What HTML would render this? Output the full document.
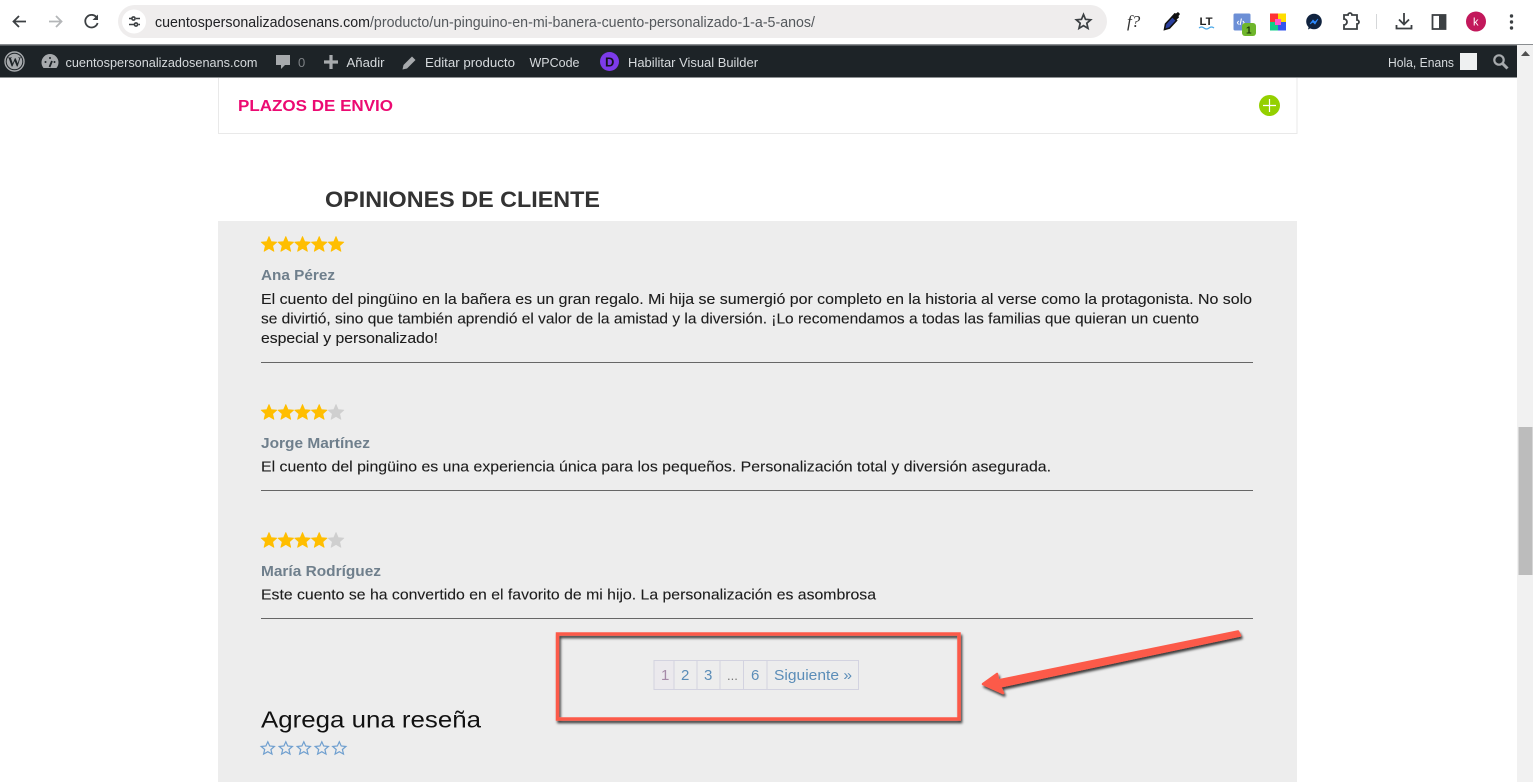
<!DOCTYPE html>
<html lang="es"><head><meta charset="utf-8"><title>Opiniones</title>
<style>
html,body{margin:0;padding:0;background:#fff;width:1533px;height:782px;overflow:hidden}
svg{display:block;position:absolute;left:0;top:0}
text{font-family:"Liberation Sans",sans-serif}
.b{font-size:14.5px;fill:#1c1c1c;stroke:#1c1c1c;stroke-width:.1px}
.n{font-size:14.5px;font-weight:700;fill:#6f7f8c}
.a{font-size:13px;fill:#d6dadd}
.p{font-size:15px;fill:#5b8db8}
</style></head><body>
<svg width="1533" height="782" viewBox="0 0 1533 782" xmlns="http://www.w3.org/2000/svg">
<defs>
<path id="s" d="M8 0.5 L10.200 5.600 L15.800 6.100 L11.600 9.800 L12.900 15.300 L8 12.400 L3.100 15.300 L4.400 9.800 L0.200 6.100 L5.800 5.600 Z"/>
<path id="o" d="M6.800 0.800 L8.700 5 L13.400 5.500 L9.900 8.500 L11 13.100 L6.800 10.700 L2.600 13.100 L3.700 8.500 L0.200 5.500 L4.900 5 Z"/>
<filter id="sh" x="-5%" y="-20%" width="110%" height="140%"><feDropShadow dx="1.500" dy="2.500" stdDeviation="1.200" flood-color="#000" flood-opacity=".75"/></filter>
</defs>
<rect width="1533" height="782" fill="#fff"/>

<!-- chrome toolbar -->
<rect x="118" y="5" width="989" height="33" rx="16.500" fill="#efeded"/>
<circle cx="134" cy="21.500" r="12" fill="#fff"/>
<g fill="none" stroke="#3c4043" stroke-width="1.600">
<path d="M129 18.500h2.500M136 18.500h4M129 24.500h5M138.500 24.500h1.500"/><circle cx="133.500" cy="18.500" r="1.600"/><circle cx="136" cy="24.500" r="1.600"/>
</g>
<path d="M26 21.500H14M19 16l-5.500 5.500 5.500 5.500" fill="none" stroke="#3c4043" stroke-width="1.800"/>
<path d="M49 21.500h12M56 16l5.500 5.500-5.500 5.500" fill="none" stroke="#b4b6b8" stroke-width="1.800"/>
<path d="M97 18a6.300 6.300 0 1 0 .6 5" fill="none" stroke="#3c4043" stroke-width="1.800"/><path d="M98 14.500v5.500h-5.500z" fill="#3c4043"/>
<text x="155" y="27" font-size="14.500" fill="#202124" textLength="660" lengthAdjust="spacingAndGlyphs">cuentospersonalizadosenans.com<tspan fill="#54585c">/producto/un-pinguino-en-mi-banera-cuento-personalizado-1-a-5-anos/</tspan></text>
<path d="M1083.500 14.500l2 4.800 5.200.5-3.900 3.400 1.200 5.100-4.500-2.700-4.500 2.700 1.200-5.100-3.900-3.400 5.200-.5z" fill="none" stroke="#3c4043" stroke-width="1.700"/>
<text x="1127" y="27" font-size="17" font-style="italic" fill="#333" style="font-family:'Liberation Serif',serif">f?</text>
<path d="M1164.500 29.500l1-5.500 7-7.500 4 4-7 7.500z" fill="#2a3f9e" stroke="#111" stroke-width="1.600"/><path d="M1171.500 16.500l3-3.500 1.500.5 2-1.500 2 2-1.500 2 .5 1.500-3.500 3z" fill="#111"/>
<text x="1199.500" y="25" font-size="11" font-weight="700" fill="#222" textLength="13" lengthAdjust="spacingAndGlyphs">LT</text>
<path d="M1199 28q2.500-2 5 0t5 0 5 0" fill="none" stroke="#4aa8e8" stroke-width="1.200"/>
<rect x="1233.500" y="13.500" width="17" height="17" rx="1.500" fill="#6c8fd6"/><text x="1236.500" y="25" font-size="9" font-weight="700" fill="#fff">‹/›</text>
<rect x="1242" y="23" width="14" height="13" rx="3" fill="#6fb62c"/><text x="1246" y="33.500" font-size="10" font-weight="700" fill="#1e3a0c">1</text>
<rect x="1270" y="13.500" width="8" height="8.500" fill="#f33"/><rect x="1278" y="13.500" width="8" height="8.500" fill="#fd0"/><rect x="1270" y="22" width="8" height="8.500" fill="#1c8"/><rect x="1278" y="22" width="8" height="8.500" fill="#35e"/><rect x="1275" y="19" width="6" height="6" fill="#f5c"/>
<circle cx="1314" cy="21.500" r="7.800" fill="#10233f"/><path d="M1308 29.500l1-4 3 2z" fill="#10233f"/><path d="M1310 24l3-4 2 2 3-3-3 5-2-2z" fill="#2e8bff" stroke="#2e8bff" stroke-width=".7"/>
<path d="M1344 15h4a2 2 0 0 1 4 0h5v5a2 2 0 0 1 0 4v5h-13v-4a2.500 2.500 0 0 0 0-6z" fill="none" stroke="#3c4043" stroke-width="1.800"/>
<rect x="1376" y="14" width="1" height="15" fill="#d5d7d9"/>
<path d="M1404 13v11M1399 19.500l5 5 5-5M1396.500 25v3.500h15V25" fill="none" stroke="#3c4043" stroke-width="1.800"/>
<rect x="1432.500" y="15" width="13" height="14" fill="none" stroke="#3c4043" stroke-width="1.800"/><rect x="1439" y="15" width="7" height="14" fill="#3c4043"/>
<circle cx="1476" cy="21.500" r="10" fill="#c2185b"/><text x="1473" y="25.500" font-size="11" fill="#fff">k</text>
<circle cx="1511.500" cy="16" r="1.700" fill="#3c4043"/><circle cx="1511.500" cy="22" r="1.700" fill="#3c4043"/><circle cx="1511.500" cy="28" r="1.700" fill="#3c4043"/>
<rect y="44" width="1533" height="1.500" fill="#8a8d90"/>

<!-- scrollbar -->
<rect x="1517" y="45" width="16" height="737" fill="#f1f1f1"/>
<rect x="1518.500" y="427" width="14" height="148" fill="#bcbcbc"/>
<path d="M1521 56l4.500-5 4.500 5z" fill="#505050"/>

<!-- admin bar -->
<rect y="45.500" width="1517" height="32" fill="#1d2327"/>
<circle cx="14.500" cy="61.500" r="9.500" fill="none" stroke="#a7aaad" stroke-width="1.400"/><circle cx="14.500" cy="61.500" r="7.800" fill="#a7aaad"/><text x="7.800" y="66.500" font-size="14" font-weight="700" fill="#1d2327" style="font-family:'Liberation Serif',serif" textLength="13.500" lengthAdjust="spacingAndGlyphs">W</text>
<path d="M43.500 68a8.500 8.500 0 1 1 13 0z" fill="#a7aaad"/><circle cx="45.500" cy="62" r="1" fill="#1d2327"/><circle cx="50" cy="58" r="1" fill="#1d2327"/><circle cx="54.500" cy="62" r="1" fill="#1d2327"/><path d="M49.500 67l2.500-6" stroke="#1d2327" stroke-width="1.800"/>
<text x="65.500" y="67" class="a" textLength="192" lengthAdjust="spacingAndGlyphs">cuentospersonalizadosenans.com</text>
<path d="M276 55h14v10h-5l-4 4v-4h-5z" fill="#a7aaad"/>
<text x="298" y="67" font-size="13" fill="#7d8185">0</text>
<path d="M331 55v14M324 62h14" stroke="#a7aaad" stroke-width="3.200"/>
<text x="346.500" y="67" class="a" textLength="38" lengthAdjust="spacingAndGlyphs">Añadir</text>
<path d="M402.500 69.500l1-4.500 8.500-8.500 3.500 3.500-8.500 8.500z" fill="#a7aaad"/>
<text x="425" y="67" class="a" textLength="90" lengthAdjust="spacingAndGlyphs">Editar producto</text>
<text x="529.500" y="67" class="a" textLength="50" lengthAdjust="spacingAndGlyphs">WPCode</text>
<circle cx="609.500" cy="61.500" r="9.500" fill="#7d3bea"/><text x="605" y="66.500" font-size="13" font-weight="700" fill="#15121e">D</text>
<text x="628" y="67" class="a" textLength="130" lengthAdjust="spacingAndGlyphs">Habilitar Visual Builder</text>
<text x="1388" y="67" class="a" textLength="66" lengthAdjust="spacingAndGlyphs">Hola, Enans</text>
<rect x="1460" y="53" width="17" height="17" fill="#eef0f1"/>
<circle cx="1499" cy="60" r="4.700" fill="none" stroke="#a7aaad" stroke-width="2.200"/><path d="M1502.500 63.500l5 5" stroke="#a7aaad" stroke-width="3"/>

<!-- accordion -->
<path d="M218.500 78v55.500h1078.500V78" fill="none" stroke="#e9e9e9" stroke-width="1"/>
<text x="238" y="111" font-size="16" font-weight="700" fill="#ec0a72" textLength="155" lengthAdjust="spacingAndGlyphs">PLAZOS DE ENVIO</text>
<circle cx="1269.500" cy="105.500" r="10.500" fill="#94d000"/>
<path d="M1269.500 99v13M1263 105.500h13" stroke="#fff" stroke-width="1.200"/>

<text x="325" y="207" font-size="22" font-weight="700" fill="#333" textLength="275" lengthAdjust="spacingAndGlyphs">OPINIONES DE CLIENTE</text>

<!-- panel -->
<rect x="218" y="221" width="1079" height="561" fill="#ededed"/>

<g fill="#ffbe00" stroke="#ffbe00" stroke-width=".8" stroke-linejoin="round"><use href="#s" x="261" y="236"/><use href="#s" x="277.800" y="236"/><use href="#s" x="294.500" y="236"/><use href="#s" x="311.200" y="236"/><use href="#s" x="328" y="236"/></g>
<text x="261" y="280" class="n" textLength="74" lengthAdjust="spacingAndGlyphs">Ana Pérez</text>
<text x="261" y="304" class="b" textLength="991" lengthAdjust="spacingAndGlyphs">El cuento del pingüino en la bañera es un gran regalo. Mi hija se sumergió por completo en la historia al verse como la protagonista. No solo</text>
<text x="261" y="323.500" class="b" textLength="938" lengthAdjust="spacingAndGlyphs">se divirtió, sino que también aprendió el valor de la amistad y la diversión. ¡Lo recomendamos a todas las familias que quieran un cuento</text>
<text x="261" y="343" class="b" textLength="177" lengthAdjust="spacingAndGlyphs">especial y personalizado!</text>
<rect x="261" y="362" width="992" height="1" fill="#666"/>

<g stroke-width=".8" stroke-linejoin="round"><g fill="#ffbe00" stroke="#ffbe00"><use href="#s" x="261" y="404"/><use href="#s" x="277.800" y="404"/><use href="#s" x="294.500" y="404"/><use href="#s" x="311.200" y="404"/></g><use href="#s" x="328" y="404" fill="#cfcfcf" stroke="#cfcfcf"/></g>
<text x="261" y="448" class="n" textLength="109" lengthAdjust="spacingAndGlyphs">Jorge Martínez</text>
<text x="261" y="471.500" class="b" textLength="790" lengthAdjust="spacingAndGlyphs">El cuento del pingüino es una experiencia única para los pequeños. Personalización total y diversión asegurada.</text>
<rect x="261" y="490" width="992" height="1" fill="#666"/>

<g stroke-width=".8" stroke-linejoin="round"><g fill="#ffbe00" stroke="#ffbe00"><use href="#s" x="261" y="532"/><use href="#s" x="277.800" y="532"/><use href="#s" x="294.500" y="532"/><use href="#s" x="311.200" y="532"/></g><use href="#s" x="328" y="532" fill="#cfcfcf" stroke="#cfcfcf"/></g>
<text x="261" y="576" class="n" textLength="120" lengthAdjust="spacingAndGlyphs">María Rodríguez</text>
<text x="261" y="599.500" class="b" textLength="615" lengthAdjust="spacingAndGlyphs">Este cuento se ha convertido en el favorito de mi hijo. La personalización es asombrosa</text>
<rect x="261" y="618" width="992" height="1" fill="#666"/>

<!-- pagination -->
<rect x="654" y="661" width="20" height="28" fill="#ebe9ed"/>
<g fill="none" stroke="#d3d3e0"><rect x="654" y="660.500" width="204.500" height="29"/><path d="M674 661v28M697 661v28M720 661v28M743.500 661v28M767 661v28"/></g>
<text x="661" y="680" font-size="15" fill="#a58aa8">1</text>
<text x="681" y="680" class="p">2</text>
<text x="704" y="680" class="p">3</text>
<text x="727" y="680" font-size="13" fill="#777">...</text>
<text x="751" y="680" class="p">6</text>
<text x="774" y="680" class="p" textLength="78" lengthAdjust="spacingAndGlyphs">Siguiente »</text>

<text x="261" y="727.500" font-size="23.500" fill="#111" textLength="220" lengthAdjust="spacingAndGlyphs">Agrega una reseña</text>
<g fill="none" stroke="#6f9fcf" stroke-width="1.200"><use href="#o" x="261" y="741"/><use href="#o" x="279" y="741"/><use href="#o" x="297" y="741"/><use href="#o" x="315" y="741"/><use href="#o" x="332.500" y="741"/></g>

<!-- annotation -->
<g filter="url(#sh)">
<rect x="557.500" y="634" width="401.500" height="85" fill="none" stroke="#fc5a4a" stroke-width="3.500"/>
<path d="M1238 631.500 L1240 635.500 L1000 686.500 L1003 693 L983 684 L997 674 L998 680.500 Z" fill="#fc5a4a" stroke="#fc5a4a" stroke-width="2.500" stroke-linejoin="round"/>
</g>
</svg>
</body></html>
